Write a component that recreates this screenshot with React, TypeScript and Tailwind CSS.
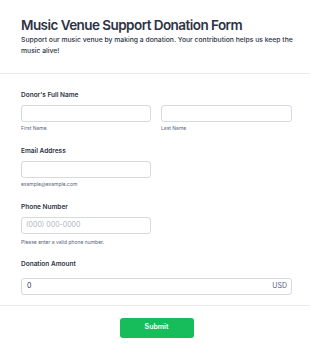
import React from 'react';

const font = { fontFamily: 'Inter, "Noto Sans", sans-serif' };

function Label({ children, className = 'mb-[5.5px]' }: { children: React.ReactNode; className?: string }) {
    return <div className={`text-[6.5px] font-semibold text-[#2c3345] leading-[7px] ${className}`}>{children}</div>;
}

function Sub({ children, className = 'mt-[4.5px]' }: { children: React.ReactNode; className?: string }) {
    return <div className={`text-[5px] text-[#57647e] leading-[5px] ${className}`}>{children}</div>;
}

function Input({ placeholder, className = '' }: { placeholder?: string; className?: string }) {
    return (
        <div className={`h-[17px] border border-[#d6d9e2] rounded-[3px] bg-white flex items-center px-[4px] text-[7px] text-[#b0b5c4] ${className}`}>
            {placeholder}
        </div>
    );
}

export default function App() {
    return (
        <div className="w-[310px] h-[353px] bg-white overflow-hidden" style={font}>
            <div className="pl-[21px] pr-[14px] pt-[17px] pb-[17px] border-b border-[#eaebf0]">
                <h1 className="text-[13.5px] font-semibold text-[#2c3345] leading-[16px] tracking-[-0.55px]">Music Venue Support Donation Form</h1>
                <p className="text-[6.8px] font-medium text-[#2c3345] leading-[10.5px] mt-[2px]">
                    Support our music venue by making a donation. Your contribution helps us keep the music alive!
                </p>
            </div>
            <div className="pl-[21px] pr-[18px] pt-[18px]">
                <div>
                    <Label>Donor's Full Name</Label>
                    <div className="flex gap-[10px]">
                        <div className="w-[130px]">
                            <Input />
                            <Sub>First Name</Sub>
                        </div>
                        <div className="w-[131px]">
                            <Input />
                            <Sub>Last Name</Sub>
                        </div>
                    </div>
                </div>
                <div className="mt-[17px]">
                    <Label>Email Address</Label>
                    <Input className="w-[130px]" />
                    <Sub>example@example.com</Sub>
                </div>
                <div className="mt-[17px]">
                    <Label>Phone Number</Label>
                    <Input className="w-[130px]" placeholder="(000) 000-0000" />
                    <Sub className="mt-[6px]">Please enter a valid phone number.</Sub>
                </div>
                <div className="mt-[16.5px]">
                    <Label className="mb-[9.5px]">Donation Amount</Label>
                    <div className="h-[17px] w-[271px] border border-[#d6d9e2] rounded-[3px] flex items-center justify-between pl-[5px] pr-[4px] text-[7px] text-[#2c3345]">
                        <span>0</span>
                        <span className="text-[#57647e]">USD</span>
                    </div>
                </div>
            </div>
            <div className="mt-[10px] border-t border-[#eaebf0] pl-[21px] pr-[18px] flex justify-center pt-[12px]">
                <button className="w-[74px] h-[20px] rounded-[3px] bg-[#18bd5b] text-white text-[7px] font-semibold">Submit</button>
            </div>
        </div>
    );
}
